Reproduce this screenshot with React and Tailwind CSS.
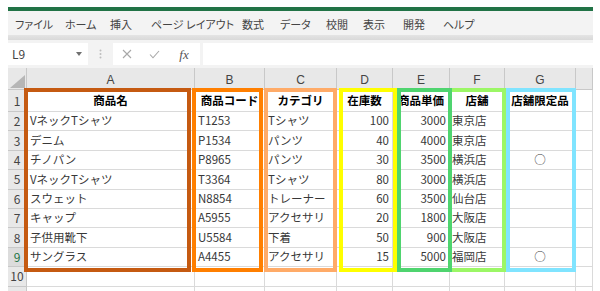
import React from "react";

const menu = [
  ["ファイル", "w-[50px]"],
  ["ホーム", "w-[45px]"],
  ["挿入", "w-[41px]"],
  ["ページ レイアウト", "w-[91px]"],
  ["数式", "w-[38px]"],
  ["データ", "w-[46px]"],
  ["校閲", "w-[37px]"],
  ["表示", "w-[40px]"],
  ["開発", "w-[40px]"],
  ["ヘルプ", "w-[40px]"],
];

const colW = ["w-[168px]", "w-[70px]", "w-[72px]", "w-[56px]", "w-[57px]", "w-[55px]", "w-[71px]", "w-[17px]"];
const letters = ["A", "B", "C", "D", "E", "F", "G", ""];
const headers = ["商品名", "商品コード", "カテゴリ", "在庫数", "商品単価", "店舗", "店舗限定品", ""];
const align = [
  "justify-start pl-[3px]",
  "justify-start pl-[3px]",
  "justify-start pl-[3px]",
  "justify-end pr-[3px]",
  "justify-end pr-[3px]",
  "justify-start pl-[2px]",
  "justify-center",
  "justify-start",
];

const data = [
  ["VネックTシャツ", "T1253", "Tシャツ", "100", "3000", "東京店", "", ""],
  ["デニム", "P1534", "パンツ", "40", "4000", "東京店", "", ""],
  ["チノパン", "P8965", "パンツ", "30", "3500", "横浜店", "○", ""],
  ["VネックTシャツ", "T3364", "Tシャツ", "80", "3000", "横浜店", "", ""],
  ["スウェット", "N8854", "トレーナー", "60", "3500", "仙台店", "", ""],
  ["キャップ", "A5955", "アクセサリ", "20", "1800", "大阪店", "", ""],
  ["子供用靴下", "U5584", "下着", "50", "900", "大阪店", "", ""],
  ["サングラス", "A4455", "アクセサリ", "15", "5000", "福岡店", "○", ""],
  ["", "", "", "", "", "", "", ""],
  ["", "", "", "", "", "", "", ""],
];

function RowHead({ n, selected }) {
  return (
    <div
      className={
        "w-[19px] shrink-0 h-full flex items-center justify-center border-r border-b border-[#c8c8c8] text-[12px] " +
        (selected ? "bg-[#dcdcdc] text-[#217346]" : "bg-[#e8e8e8] text-[#444]")
      }
    >
      {n}
    </div>
  );
}

export default function App() {
  return (
    <div className="relative w-[600px] h-[291px] bg-white overflow-hidden pt-[7px] pl-[8px] font-['Noto_Sans_CJK_JP','Noto_Sans',sans-serif] leading-none">
      <div className="w-[585px]">
        {/* green bar */}
        <div className="h-[4px] bg-[#217346]" />
        {/* menu */}
        <div className="h-[24px] bg-[#f3f3f3] flex items-center pl-[7px] pt-[2px] text-[11px] text-[#444] [font-feature-settings:'palt']">
          {menu.map(([t, w]) => (
            <div key={t} className={w + " shrink-0 whitespace-nowrap"}>
              {t}
            </div>
          ))}
        </div>
        {/* band */}
        <div className="h-[5px] bg-gradient-to-b from-[#e4e4e4] to-[#d9d9d9]" />
        {/* formula row */}
        <div className="h-[28px] bg-[#f3f3f3] pt-[3px] flex items-start">
          <div className="w-[80px] h-[22px] bg-white flex items-center justify-between pl-[4px] pr-[6px]">
            <span className="text-[12px] text-[#444]">L9</span>
            <svg width="6" height="4" viewBox="0 0 6 4">
              <polygon points="0,0 6,0 3,4" fill="#707070" />
            </svg>
          </div>
          <div className="w-[25px] h-[22px] flex items-center justify-center">
            <svg width="3" height="10" viewBox="0 0 3 10">
              <circle cx="1.5" cy="1.5" r="1" fill="#bdbdbd" />
              <circle cx="1.5" cy="5" r="1" fill="#bdbdbd" />
              <circle cx="1.5" cy="8.5" r="1" fill="#bdbdbd" />
            </svg>
          </div>
          <div className="w-[87px] h-[22px] bg-white flex items-center">
            <div className="w-[26px] flex justify-center pl-[2px]">
              <svg width="10" height="10" viewBox="0 0 10 10">
                <path d="M1 1 L9 9 M9 1 L1 9" stroke="#a8a8a8" strokeWidth="1.1" fill="none" />
              </svg>
            </div>
            <div className="w-[30px] flex justify-center">
              <svg width="11" height="9" viewBox="0 0 11 9">
                <path d="M1 4.5 L4 7.8 L10 1" stroke="#a8a8a8" strokeWidth="1.1" fill="none" />
              </svg>
            </div>
            <div className="w-[30px] flex justify-center font-['Liberation_Serif',serif] italic text-[13px] text-[#555]">
              fx
            </div>
          </div>
          <div className="w-[3px]" />
          <div className="w-[390px] h-[22px] bg-white" />
        </div>
        {/* sheet */}
        <div className="bg-white">
          {/* column header */}
          <div className="h-[22px] flex bg-[#e8e8e8]">
            <div className="w-[19px] shrink-0 h-full border-r border-b border-[#c8c8c8] relative">
              <svg className="absolute left-[2px] bottom-[1px]" width="15" height="13" viewBox="0 0 15 13">
                <polygon points="15,0 15,13 0,13" fill="#b6b6b6" />
              </svg>
            </div>
            {letters.map((l, i) => (
              <div
                key={i}
                className={colW[i] + " shrink-0 h-full border-r border-b border-[#c8c8c8] flex items-end justify-center pb-[3px] text-[12px] text-[#444] font-['Liberation_Sans',sans-serif]"}
              >
                {l}
              </div>
            ))}
          </div>
          {/* row 1 */}
          <div className="h-[22px] flex">
            <RowHead n={1} />
            {headers.map((h, i) => (
              <div
                key={i}
                className={colW[i] + " shrink-0 h-full border-r border-b border-[#dadada] flex items-center justify-center text-[11.5px] font-bold text-black whitespace-nowrap overflow-hidden"}
              >
                {h}
              </div>
            ))}
          </div>
          {data.map((r, ri) => (
            <div key={ri} className="h-[19.4px] flex">
              <RowHead n={ri + 2 <= 10 ? ri + 2 : ""} selected={ri + 2 === 9} />
              {r.map((c, ci) => (
                <div
                  key={ci}
                  className={colW[ci] + " shrink-0 h-full border-r border-b border-[#dadada] flex items-center whitespace-nowrap overflow-hidden text-[11.5px] text-[#383838] " + align[ci]}
                >
                  {c}
                </div>
              ))}
            </div>
          ))}
        </div>
      </div>

      {/* coloured column outlines */}
      <div className="absolute left-[24px] top-[88px] w-[167px] h-[184px] border-[4px] border-[#c55a11]" />
      <div className="absolute left-[192px] top-[88px] w-[71px] h-[184px] border-[4px] border-[#ff7f00]" />
      <div className="absolute left-[264px] top-[88px] w-[73px] h-[184px] border-[4px] border-[#ffab68]" />
      <div className="absolute left-[448px] top-[88px] w-[58px] h-[184px] border-[4px] border-[#9cf766]" />
      <div className="absolute left-[339px] top-[88px] w-[58px] h-[184px] border-[4px] border-[#ffff00]" />
      <div className="absolute left-[397px] top-[88px] w-[55px] h-[184px] border-[4px] border-[#4fd46f]" />
      <div className="absolute left-[506px] top-[88px] w-[70px] h-[184px] border-[4px] border-[#80e4ff]" />
    </div>
  );
}
